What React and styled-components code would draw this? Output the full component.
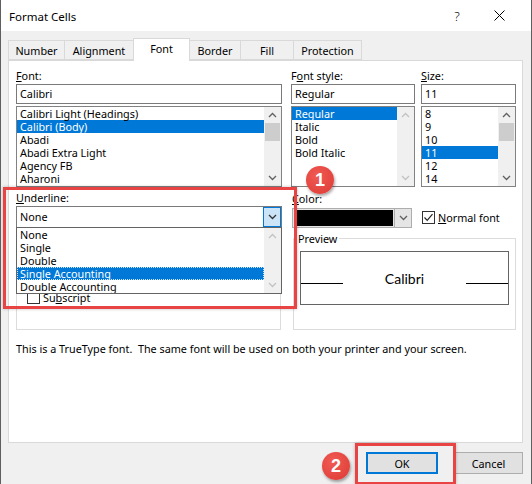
import React from "react";
import styled, { createGlobalStyle } from "styled-components";

const UI_FONT = `"Noto Sans", "Open Sans", sans-serif`;

const GlobalStyle = createGlobalStyle`
  html, body {
    margin: 0;
    padding: 0;
    background: #ffffff;
  }
  * {
    box-sizing: border-box;
  }
`;

const Window = styled.div`
  position: relative;
  width: 532px;
  height: 484px;
  border-left: 1px solid #5f5f5f;
  border-right: 1px solid #5f5f5f;
  background: #f0f0f0;
  overflow: hidden;
  font-family: ${UI_FONT};
  font-size: 10.8px;
  color: #000;
`;

const TitleBar = styled.div`
  height: 31px;
  background: #fff;
  display: flex;
  align-items: center;
  padding-left: 8px;
`;

const Title = styled.div`
  flex: 1;
  font-size: 11.5px;
  padding-top: 1px;
`;

const HelpButton = styled.div`
  width: 20px;
  font-size: 13px;
  text-align: center;
  margin-right: 27px;
  font-weight: 300;
`;

const CloseButton = styled.div`
  width: 11px;
  height: 11px;
  margin-right: 26px;
  display: flex;
`;

const Body = styled.div`
  padding: 7px 7px 0 7px;
`;

const Tabs = styled.div`
  display: flex;
  align-items: flex-end;
  height: 22px;
`;

const Tab = styled.div`
  position: relative;
  z-index: ${(p) => (p.$active ? 2 : 1)};
  width: ${(p) => p.$w}px;
  height: ${(p) => (p.$active ? 23 : 20)}px;
  margin-bottom: ${(p) => (p.$active ? -1 : 0)}px;
  margin-left: ${(p) => (p.$first ? 0 : -1)}px;
  border: 1px solid #d9d9d9;
  border-bottom: ${(p) => (p.$active ? "none" : "1px solid #d9d9d9")};
  background: ${(p) => (p.$active ? "#fff" : "#f0f0f0")};
  display: flex;
  align-items: center;
  justify-content: center;
  padding-bottom: ${(p) => (p.$active ? 3 : 0)}px;
`;

const Panel = styled.div`
  position: relative;
  width: 515px;
  height: 383px;
  border: 1px solid #d9d9d9;
  background: #fff;
  padding: 7px 0 0 7px;
`;

const Row = styled.div`
  display: flex;
  align-items: ${(p) => p.$align || "flex-start"};
  margin-top: ${(p) => p.$mt || 0}px;
`;

const Column = styled.div`
  display: flex;
  flex-direction: column;
  width: ${(p) => p.$w}px;
  margin-left: ${(p) => p.$ml || 0}px;
`;

const Label = styled.div`
  height: 15px;
  line-height: 15px;
`;

const U = styled.span`
  text-decoration: underline;
  text-underline-offset: 1px;
`;

const TextBox = styled.div`
  height: 20px;
  margin-top: 1px;
  border: 1px solid #7a7a7a;
  padding-left: 3px;
  line-height: 18px;
`;

const ListBox = styled.div`
  display: flex;
  height: 81px;
  margin-top: 2px;
  border: 1px solid #828282;
  background: #fff;
`;

const Items = styled.div`
  flex: 1;
  overflow: hidden;
`;

const Item = styled.div`
  height: 13px;
  line-height: 13px;
  padding-left: 3px;
  white-space: nowrap;
  background: ${(p) => (p.$selected ? "#0078d7" : "transparent")};
  color: ${(p) => (p.$selected ? "#fff" : "#000")};
  outline: ${(p) => (p.$focus ? "1px dotted #cfe6fb" : "none")};
  outline-offset: -1px;
`;

const ScrollBar = styled.div`
  width: 17px;
  background: #f0f0f0;
  display: flex;
  flex-direction: column;
`;

const ScrollArrow = styled.div`
  height: 16px;
  display: flex;
  align-items: center;
  justify-content: center;
`;

const Thumb = styled.div`
  height: 18px;
  margin: 0 1px;
  background: #cdcdcd;
`;

const Spacer = styled.div`
  flex: 1;
`;

const Combo = styled.div`
  position: relative;
  display: flex;
  height: ${(p) => p.$h || 22}px;
  margin-top: ${(p) => p.$mt || 1}px;
  border: 1px solid ${(p) => p.$border || "#7a7a7a"};
  background: ${(p) => p.$bg || "#fff"};
`;

const ComboText = styled.div`
  flex: 1;
  padding-left: 3px;
  line-height: 20px;
`;

const ColorFill = styled.div`
  flex: 1;
  margin: 1px;
  background: #000;
`;

const ComboArrow = styled.div`
  width: ${(p) => p.$w || 18}px;
  display: flex;
  align-items: center;
  justify-content: center;
  background: ${(p) => p.$bg};
  border: ${(p) => (p.$edge ? `1px solid ${p.$edge}` : "none")};
  border-left: ${(p) => (p.$edge ? `1px solid ${p.$edge}` : "1px solid #adadad")};
`;

const DropList = styled.div`
  position: absolute;
  z-index: 5;
  top: 100%;
  left: -1px;
  width: 266px;
  height: 67px;
  display: flex;
  border: 1px solid #646464;
  background: #fff;
`;

const CheckRow = styled.label`
  display: flex;
  align-items: center;
  height: ${(p) => p.$h || 20}px;
  gap: 3px;
  margin-left: ${(p) => p.$ml || 0}px;
`;

const Box = styled.span`
  width: 13px;
  height: 13px;
  border: 1px solid #333;
  background: #fff;
  display: flex;
  align-items: center;
  justify-content: center;
`;

const Group = styled.fieldset`
  width: ${(p) => p.$w}px;
  height: ${(p) => p.$h}px;
  margin: ${(p) => p.$mt || 0}px 0 0 ${(p) => p.$ml || 0}px;
  padding: ${(p) => p.$pt || 0}px 6px 0 ${(p) => p.$pl || 6}px;
  border: 1px solid #dcdcdc;
  min-inline-size: 0;
`;

const Legend = styled.legend`
  padding: 0 2px;
  margin-left: -4px;
  height: 15px;
  line-height: 15px;
`;

const PreviewBox = styled.div`
  height: 54px;
  margin-top: 5px;
  border: 1px solid #646464;
  display: flex;
  align-items: center;
`;

const PreviewLine = styled.div`
  width: 42px;
  height: 1px;
  margin-top: 10px;
  background: #000;
`;

const PreviewText = styled.div`
  flex: 1;
  text-align: center;
  font-family: Lato, "Liberation Sans", sans-serif;
  font-size: 14px;
`;

const Note = styled.div`
  margin-top: 11px;
  line-height: 15px;
  white-space: nowrap;
`;

const Footer = styled.div`
  display: flex;
  justify-content: flex-end;
  gap: 16px;
  margin-top: 9px;
  padding-right: 1px;
`;

const Button = styled.div`
  width: ${(p) => p.$w}px;
  height: 22px;
  background: #e1e1e1;
  border: ${(p) => (p.$default ? "2px solid #0078d7" : "1px solid #adadad")};
  display: flex;
  align-items: center;
  justify-content: center;
`;

const Highlight = styled.div`
  position: absolute;
  z-index: 10;
  left: ${(p) => p.$x}px;
  top: ${(p) => p.$y}px;
  width: ${(p) => p.$w}px;
  height: ${(p) => p.$h}px;
  border: 3px solid #e94444;
  box-shadow: 0 0 3px rgba(0, 0, 0, 0.25);
`;

const Badge = styled.div`
  position: absolute;
  z-index: 11;
  left: ${(p) => p.$x}px;
  top: ${(p) => p.$y}px;
  width: 28px;
  height: 28px;
  border-radius: 50%;
  background: radial-gradient(circle at 40% 35%, #f05a52, #dd3a35);
  box-shadow: 1px 2px 3px rgba(0, 0, 0, 0.35);
  color: #fff;
  font-family: "Liberation Sans", Arial, sans-serif;
  font-weight: bold;
  font-size: 18px;
  display: flex;
  align-items: center;
  justify-content: center;
`;

const Chevron = ({ dir = "down", color = "#606060" }) => (
  <svg width="9" height="6" viewBox="0 0 9 6">
    <path
      d={dir === "up" ? "M1 5 L4.5 1.5 L8 5" : "M1 1 L4.5 4.5 L8 1"}
      fill="none"
      stroke={color}
      strokeWidth="1.3"
    />
  </svg>
);

const Scroll = ({ disabled, thumb }) => {
  const c = disabled ? "#c2c2c2" : "#606060";
  return (
    <ScrollBar>
      <ScrollArrow>
        <Chevron dir="up" color={c} />
      </ScrollArrow>
      {thumb && <Thumb />}
      <Spacer />
      <ScrollArrow>
        <Chevron dir="down" color={c} />
      </ScrollArrow>
    </ScrollBar>
  );
};

const CheckMark = () => (
  <svg width="11" height="11" viewBox="0 0 11 11">
    <path d="M1.5 5.5 L4.2 8.3 L9.5 2.2" fill="none" stroke="#222" strokeWidth="1.2" />
  </svg>
);

const tabs = [
  { name: "Number", w: 57 },
  { name: "Alignment", w: 70 },
  { name: "Font", w: 57, active: true },
  { name: "Border", w: 52 },
  { name: "Fill", w: 54 },
  { name: "Protection", w: 69 },
];

const fonts = ["Calibri Light (Headings)", "Calibri (Body)", "Abadi", "Abadi Extra Light", "Agency FB", "Aharoni"];
const styles = ["Regular", "Italic", "Bold", "Bold Italic"];
const sizes = ["8", "9", "10", "11", "12", "14"];
const underlines = ["None", "Single", "Double", "Single Accounting", "Double Accounting"];

export default function App() {
  return (
    <>
      <GlobalStyle />
      <Window>
        <TitleBar>
          <Title>Format Cells</Title>
          <HelpButton>?</HelpButton>
          <CloseButton>
            <svg width="11" height="11" viewBox="0 0 11 11">
              <path d="M0.5 0.5 L10.5 10.5 M10.5 0.5 L0.5 10.5" stroke="#000" strokeWidth="1" />
            </svg>
          </CloseButton>
        </TitleBar>

        <Body>
          <Tabs>
            {tabs.map((t, i) => (
              <Tab key={t.name} $w={t.w} $active={t.active} $first={i === 0}>
                {t.name}
              </Tab>
            ))}
          </Tabs>

          <Panel>
            <Row>
              <Column $w={266}>
                <Label>
                  <U>F</U>ont:
                </Label>
                <TextBox>Calibri</TextBox>
                <ListBox>
                  <Items>
                    {fonts.map((f, i) => (
                      <Item key={f} $selected={i === 1}>
                        {f}
                      </Item>
                    ))}
                  </Items>
                  <Scroll thumb />
                </ListBox>
              </Column>
              <Column $w={124} $ml={9}>
                <Label>
                  F<U>o</U>nt style:
                </Label>
                <TextBox>Regular</TextBox>
                <ListBox>
                  <Items>
                    {styles.map((s, i) => (
                      <Item key={s} $selected={i === 0}>
                        {s}
                      </Item>
                    ))}
                  </Items>
                  <Scroll disabled />
                </ListBox>
              </Column>
              <Column $w={95} $ml={6}>
                <Label>
                  <U>S</U>ize:
                </Label>
                <TextBox>11</TextBox>
                <ListBox>
                  <Items>
                    {sizes.map((s) => (
                      <Item key={s} $selected={s === "11"}>
                        {s}
                      </Item>
                    ))}
                  </Items>
                  <Scroll thumb />
                </ListBox>
              </Column>
            </Row>

            <Row $mt={3} $align="flex-end">
              <Column $w={266}>
                <Label>
                  <U>U</U>nderline:
                </Label>
                <Combo>
                  <ComboText>None</ComboText>
                  <ComboArrow $bg="#cce4f7" $edge="#0078d7">
                    <Chevron color="#333" />
                  </ComboArrow>
                  <DropList>
                    <Items>
                      {underlines.map((u, i) => (
                        <Item key={u} $selected={i === 3} $focus={i === 3}>
                          {u}
                        </Item>
                      ))}
                    </Items>
                    <Scroll disabled />
                  </DropList>
                </Combo>
              </Column>
              <Column $w={120} $ml={10}>
                <Label>
                  <U>C</U>olor:
                </Label>
                <Combo $h={20} $mt={2} $border="#adadad" $bg="#e5e5e5">
                  <ColorFill />
                  <ComboArrow $w={17} $bg="#e5e5e5">
                    <Chevron />
                  </ComboArrow>
                </Combo>
              </Column>
              <CheckRow $h={22} $ml={10}>
                <Box>
                  <CheckMark />
                </Box>
                <span>
                  <U>N</U>ormal font
                </span>
              </CheckRow>
            </Row>

            <Row $mt={3}>
              {/* effects group sits under the open underline list; only its last row shows */}
              <Group $w={265} $h={92} $mt={7} $pl={10} $pt={48}>
                <CheckRow>
                  <Box />
                  <span>
                    Su<U>b</U>script
                  </span>
                </CheckRow>
              </Group>
              <Group $w={223} $h={99} $ml={12}>
                <Legend>Preview</Legend>
                <PreviewBox>
                  <PreviewLine />
                  <PreviewText>Calibri</PreviewText>
                  <PreviewLine />
                </PreviewBox>
              </Group>
            </Row>

            <Note>This is a TrueType font.&nbsp; The same font will be used on both your printer and your screen.</Note>
          </Panel>

          <Footer>
            <Button $w={72} $default>
              OK
            </Button>
            <Button $w={69}>Cancel</Button>
          </Footer>
        </Body>

        <Highlight $x={2} $y={187} $w={294} $h={122} />
        <Badge $x={305} $y={166}>1</Badge>
        <Highlight $x={354} $y={443} $w={101} $h={42} />
        <Badge $x={321} $y={452}>2</Badge>
      </Window>
    </>
  );
}
